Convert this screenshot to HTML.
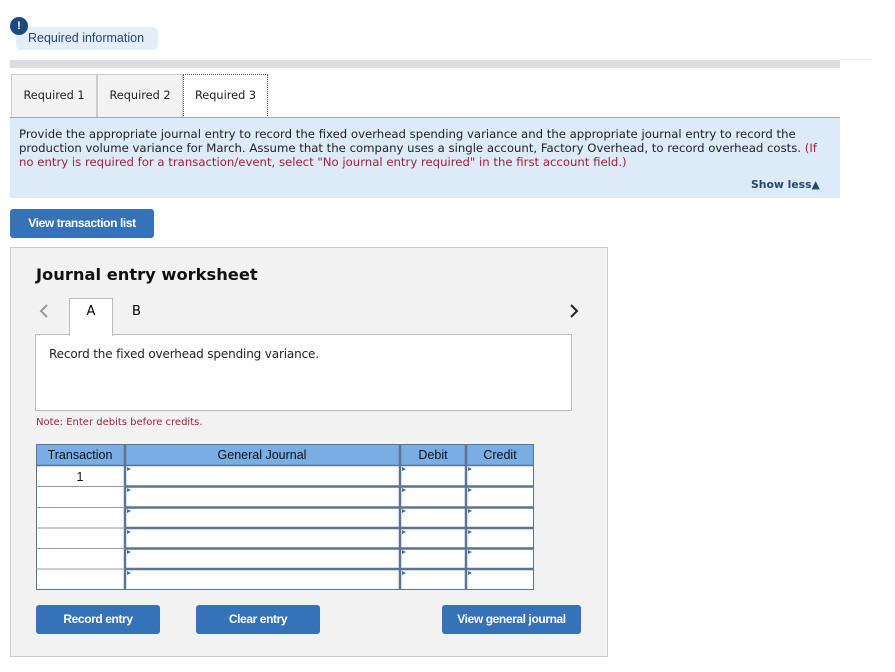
<!DOCTYPE html>
<html><head><meta charset="utf-8"><style>
body{margin:0;width:895px;height:672px;background:#fff;position:relative;font-family:"DejaVu Sans",Verdana,sans-serif;overflow:hidden}
.a{position:absolute}
.ar{font-family:"Liberation Sans",Arial,sans-serif}
.btn{position:absolute;background:#3572b8;color:#fff;font-family:"Liberation Sans",Arial,sans-serif;font-weight:bold;font-size:12px;text-align:center;border-radius:3px;letter-spacing:-0.4px}
.tab{position:absolute;top:74px;height:42px;background:#f2f2f2;border:1px solid #ccc;font-size:11.3px;line-height:42px;text-align:center;color:#222}
</style></head><body>
<div class="a" style="left:16px;top:27px;width:142px;height:23px;background:#e4eef8;border-radius:5px"></div>
<div class="a ar" style="left:28px;top:31px;font-size:12.5px;color:#24466e">Required information</div>
<div class="a ar" style="left:10px;top:17px;width:18px;height:18px;border-radius:50%;background:#1c4a80;color:#fff;font-size:11px;font-weight:bold;text-align:center;line-height:18px">!</div>
<div class="a" style="left:10px;top:60px;width:830px;height:8px;background:#ddd"></div>
<div class="a" style="left:840px;top:59px;width:32px;height:1px;background:#eee"></div>
<div class="tab" style="left:11px;width:84px">Required 1</div>
<div class="tab" style="left:97px;width:84px">Required 2</div>
<div class="tab" style="left:183px;width:83px;background:#fff;border:1px dotted #555">Required 3</div>
<div class="a" style="left:10px;top:117px;width:830px;height:80px;background:#dcebf7;border-top:1px solid #9ab"></div>
<div class="a" style="left:19px;top:127px;width:815px;font-size:11.7px;line-height:14px;color:#222">Provide the appropriate journal entry to record the fixed overhead spending variance and the appropriate journal entry to record the production volume variance for March. Assume that the company uses a single account, Factory Overhead, to record overhead costs. <span style="color:#a0213b">(If no entry is required for a transaction/event, select "No journal entry required" in the first account field.)</span></div>
<div class="a" style="left:751px;top:178px;font-size:10.8px;font-weight:bold;color:#24466e">Show less▲</div>
<div class="btn" style="left:10px;top:209px;width:144px;height:29px;line-height:29px">View transaction list</div>
<div class="a" style="left:10px;top:247px;width:596px;height:408px;background:#f2f2f2;border:1px solid #ccc"></div>
<div class="a" style="left:36px;top:265px;font-size:16.3px;font-weight:bold;color:#111">Journal entry worksheet</div>
<svg class="a" style="left:38px;top:303px" width="12" height="16"><path d="M9 2 L3 8 L9 14" stroke="#999" stroke-width="2" fill="none"/></svg>
<svg class="a" style="left:568px;top:303px" width="12" height="16"><path d="M3 2 L9 8 L3 14" stroke="#222" stroke-width="2" fill="none"/></svg>
<div class="a" style="left:69px;top:298px;width:42px;height:37px;background:#fff;border:1px solid #bbb;border-bottom:none;z-index:2;text-align:center;line-height:26px;font-size:13px">A</div>
<div class="a" style="left:132px;top:304px;font-size:13px">B</div>
<div class="a" style="left:35px;top:334px;width:535px;height:75px;background:#fff;border:1px solid #bbb"></div>
<div class="a" style="left:49px;top:347px;font-size:12px;color:#222;letter-spacing:-0.15px">Record the fixed overhead spending variance.</div>
<div class="a" style="left:36px;top:417px;font-size:10px;color:#a0213b">Note: Enter debits before credits.</div>
<svg class="a" style="left:36px;top:444px" width="500" height="148">
<rect x="0" y="0" width="498" height="146" fill="#fff"/>
<rect x="0" y="0" width="498" height="21" fill="#79ade3"/>
<g stroke="#5d7590" fill="none">
<rect x="0.5" y="0.5" width="497" height="145" stroke="#5d7590"/>
<line x1="89" y1="0" x2="89" y2="146" stroke-width="2.5"/>
<line x1="364" y1="0" x2="364" y2="146" stroke-width="2.5"/>
<line x1="430" y1="0" x2="430" y2="146" stroke-width="2.5"/>
<line x1="0" y1="21.5" x2="498" y2="21.5" stroke-width="1.5"/>
<g stroke-width="2.5"><line x1="89" y1="42.5" x2="498" y2="42.5"/><line x1="89" y1="63.5" x2="498" y2="63.5"/><line x1="89" y1="84" x2="498" y2="84"/><line x1="89" y1="104.5" x2="498" y2="104.5"/><line x1="89" y1="125" x2="498" y2="125"/></g>
<g stroke="#999" stroke-width="1"><line x1="0" y1="42.5" x2="89" y2="42.5"/><line x1="0" y1="63.5" x2="89" y2="63.5"/><line x1="0" y1="84" x2="89" y2="84"/><line x1="0" y1="104.5" x2="89" y2="104.5"/><line x1="0" y1="125" x2="89" y2="125"/></g>
</g>
<g fill="#3a6fb0"><path d="M91 23 L95 25 L91 27Z"/><path d="M366 23 L370 25 L366 27Z"/><path d="M432 23 L436 25 L432 27Z"/>
<path d="M91 44 L95 46 L91 48Z"/><path d="M366 44 L370 46 L366 48Z"/><path d="M432 44 L436 46 L432 48Z"/>
<path d="M91 65 L95 67 L91 69Z"/><path d="M366 65 L370 67 L366 69Z"/><path d="M432 65 L436 67 L432 69Z"/>
<path d="M91 86 L95 88 L91 90Z"/><path d="M366 86 L370 88 L366 90Z"/><path d="M432 86 L436 88 L432 90Z"/>
<path d="M91 106 L95 108 L91 110Z"/><path d="M366 106 L370 108 L366 110Z"/><path d="M432 106 L436 108 L432 110Z"/>
<path d="M91 127 L95 129 L91 131Z"/><path d="M366 127 L370 129 L366 131Z"/><path d="M432 127 L436 129 L432 131Z"/></g>
<text x="44" y="15" font-family="Liberation Sans" font-size="12.5" text-anchor="middle" fill="#111">Transaction</text>
<text x="226" y="15" font-family="Liberation Sans" font-size="12.5" text-anchor="middle" fill="#111">General Journal</text>
<text x="397" y="15" font-family="Liberation Sans" font-size="12.5" text-anchor="middle" fill="#111">Debit</text>
<text x="464" y="15" font-family="Liberation Sans" font-size="12.5" text-anchor="middle" fill="#111">Credit</text>
<text x="44" y="37" font-family="Liberation Sans" font-size="12.5" text-anchor="middle" fill="#111">1</text>
</svg>
<div class="btn" style="left:36px;top:605px;width:124px;height:29px;line-height:29px">Record entry</div>
<div class="btn" style="left:196px;top:605px;width:124px;height:29px;line-height:29px">Clear entry</div>
<div class="btn" style="left:442px;top:605px;width:139px;height:29px;line-height:29px">View general journal</div>
</body></html>
